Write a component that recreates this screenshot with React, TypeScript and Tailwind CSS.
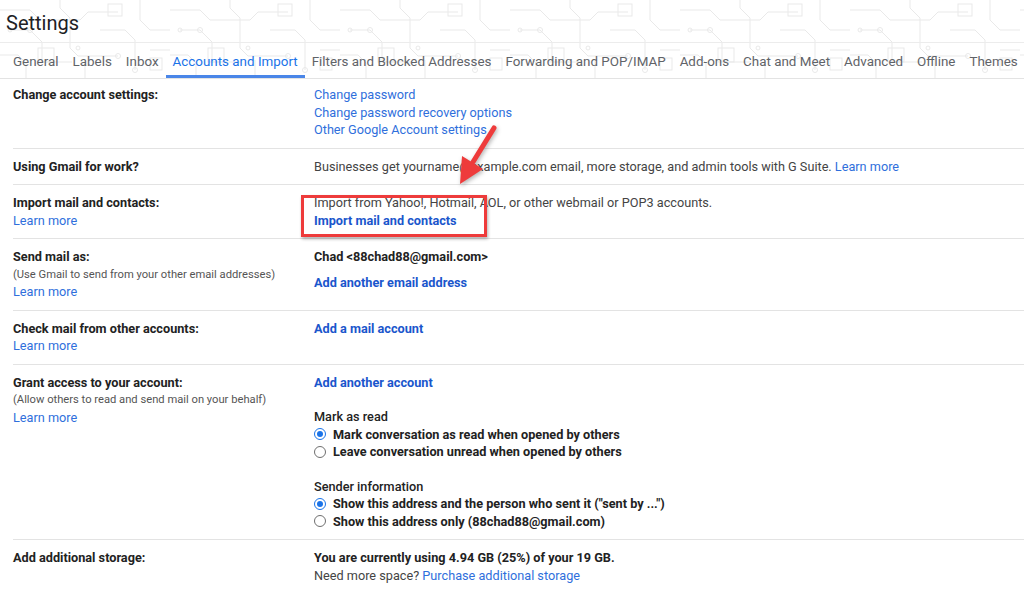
import React from 'react'

const TABS = [
  'General',
  'Labels',
  'Inbox',
  'Accounts and Import',
  'Filters and Blocked Addresses',
  'Forwarding and POP/IMAP',
  'Add-ons',
  'Chat and Meet',
  'Advanced',
  'Offline',
  'Themes',
]

function CircuitBg() {
  return (
    <svg className="absolute inset-0 h-full w-full" aria-hidden="true">
      <defs>
        <pattern id="circuit" width="170" height="80" patternUnits="userSpaceOnUse">
          <g fill="none" stroke="#e9e9e9" strokeWidth="1">
            <path d="M0 10h30l10 10h40l8-8h30" />
            <path d="M10 30h20l12 12v20h30" />
            <path d="M60 0v8l10 10v30l8 8h40" />
            <path d="M100 30h25l10 10v30" />
            <path d="M140 0v20l10 10h20" />
            <path d="M0 55h18l8 8v17" />
            <path d="M85 60v20" />
            <path d="M150 50h20" />
            <rect x="108" y="4" width="14" height="12" />
            <rect x="38" y="48" width="16" height="14" />
            <rect x="150" y="58" width="12" height="12" />
            <circle cx="30" cy="30" r="2.5" />
            <circle cx="118" cy="56" r="2.5" />
            <circle cx="135" cy="70" r="2.5" />
            <circle cx="78" cy="48" r="2" />
            <circle cx="10" cy="30" r="2" />
          </g>
        </pattern>
      </defs>
      <rect width="100%" height="100%" fill="url(#circuit)" />
    </svg>
  )
}

function Link({ children, bold = false }: { children: React.ReactNode; bold?: boolean }) {
  return (
    <a className={bold ? 'font-bold text-[#1a56cc]' : 'text-[#2f6fdc]'}>{children}</a>
  )
}

function Radio({ checked, label }: { checked?: boolean; label: string }) {
  return (
    <label className="flex items-center gap-[7px] font-bold text-[#222]">
      <span
        className={
          checked
            ? 'flex h-[12px] w-[12px] items-center justify-center rounded-full border border-[#1a73e8]'
            : 'h-[12px] w-[12px] rounded-full border border-[#6f6f6f]'
        }
      >
        {checked && <span className="h-[6px] w-[6px] rounded-full bg-[#1a73e8]" />}
      </span>
      {label}
    </label>
  )
}

function Row({
  left,
  children,
  last = false,
  first = false,
}: {
  left: React.ReactNode
  children: React.ReactNode
  last?: boolean
  first?: boolean
}) {
  return (
    <div
      className={`relative flex ${first ? 'pt-[7px]' : 'pt-[9px]'} pb-[9px] ${last ? '' : 'border-b border-[#e3e3e3]'}`}
    >
      <div className="w-[301px] shrink-0">{left}</div>
      <div className="flex-1">{children}</div>
    </div>
  )
}

function Label({ title, sub, learn = false }: { title: string; sub?: string; learn?: boolean }) {
  return (
    <div className="flex flex-col">
      <span className="font-bold text-[#222]">{title}</span>
      {sub && <span className="text-[11.2px] text-[#555]">{sub}</span>}
      {learn && <Link>Learn more</Link>}
    </div>
  )
}

export default function App() {
  return (
    <div className="relative h-[594px] w-[1024px] overflow-hidden bg-white font-['Roboto','Liberation_Sans',sans-serif] text-[12.7px] leading-[17.5px] text-[#444]">
      {/* header with theme background */}
      <div className="relative">
        <CircuitBg />
        <div className="relative flex h-[43px] items-center border-b border-[#ececec] pl-[6px] pt-[5px] text-[20px] text-[#202124]">
          Settings
        </div>
        <div className="relative flex h-[36px] border-b border-[#e3e3e3] pl-[6px]">
          {TABS.map(t => (
            <div
              key={t}
              className={
                t === 'Accounts and Import'
                  ? 'flex shrink-0 items-center whitespace-nowrap border-b-[3px] border-[#4a86e8] px-[7px] pt-[6px] text-[13.4px] text-[#1a73e8]'
                  : 'flex shrink-0 items-center whitespace-nowrap border-b-[3px] border-transparent px-[7px] pt-[6px] text-[13.4px] text-[#5f6368]'
              }
            >
              {t}
            </div>
          ))}
        </div>
      </div>

      <div className="pl-[13px]">
        <Row first left={<Label title="Change account settings:" />}>
          <div className="flex flex-col">
            <Link>Change password</Link>
            <Link>Change password recovery options</Link>
            <Link>Other Google Account settings</Link>
          </div>
        </Row>

        <Row left={<Label title="Using Gmail for work?" />}>
          <div>
            Businesses get yourname@example.com email, more storage, and admin tools with G Suite.{' '}
            <Link>Learn more</Link>
          </div>
        </Row>

        <Row left={<Label title="Import mail and contacts:" learn />}>
          <div className="relative flex flex-col">
            <span>Import from Yahoo!, Hotmail, AOL, or other webmail or POP3 accounts.</span>
            <Link bold>Import mail and contacts</Link>
            <div className="absolute left-[-13px] top-[1px] h-[42px] w-[186px] border-[3px] border-[#ee3b3b] shadow-[1px_2px_3px_rgba(0,0,0,0.3)]" />
          </div>
        </Row>

        <Row
          left={
            <Label title="Send mail as:" sub="(Use Gmail to send from your other email addresses)" learn />
          }
        >
          <div className="flex flex-col">
            <span className="font-bold text-[#222]">Chad &lt;88chad88@gmail.com&gt;</span>
            <div className="mt-[8px]">
              <Link bold>Add another email address</Link>
            </div>
          </div>
        </Row>

        <Row left={<Label title="Check mail from other accounts:" learn />}>
          <Link bold>Add a mail account</Link>
        </Row>

        <Row
          left={
            <Label
              title="Grant access to your account:"
              sub="(Allow others to read and send mail on your behalf)"
              learn
            />
          }
        >
          <div className="flex flex-col">
            <Link bold>Add another account</Link>
            <span className="mt-[17px] font-medium text-[#222]">Mark as read</span>
            <Radio checked label="Mark conversation as read when opened by others" />
            <Radio label="Leave conversation unread when opened by others" />
            <span className="mt-[17px] font-medium text-[#222]">Sender information</span>
            <Radio checked label={'Show this address and the person who sent it ("sent by ...")'} />
            <Radio label="Show this address only (88chad88@gmail.com)" />
          </div>
        </Row>

        <Row last left={<Label title="Add additional storage:" />}>
          <div className="flex flex-col">
            <span className="font-bold text-[#222]">You are currently using 4.94 GB (25%) of your 19 GB.</span>
            <span>
              Need more space? <Link>Purchase additional storage</Link>
            </span>
          </div>
        </Row>
      </div>

      {/* annotation arrow */}
      <svg
        className="absolute left-[450px] top-[115px] drop-shadow-[1px_2px_2px_rgba(0,0,0,0.3)]"
        width="60"
        height="80"
        viewBox="450 115 60 80"
      >
        <line x1="494" y1="128" x2="473" y2="162" stroke="#ee3b3b" strokeWidth="5" strokeLinecap="round" />
        <polygon points="460,184 462,156 483,169" fill="#ee3b3b" />
      </svg>
    </div>
  )
}
